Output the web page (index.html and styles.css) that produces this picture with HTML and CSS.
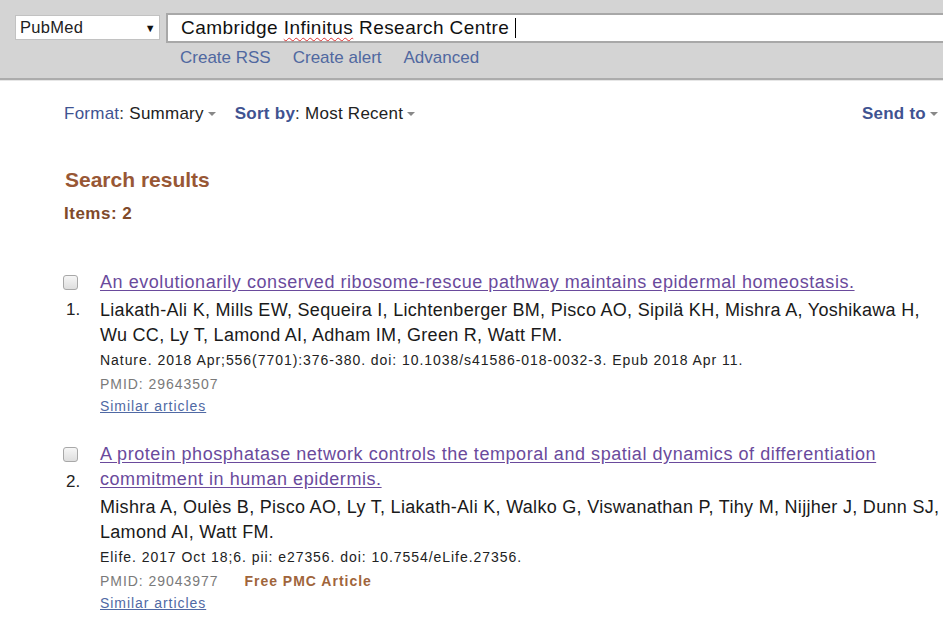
FILE: index.html
```html
<!DOCTYPE html>
<html>
<head>
<meta charset="utf-8">
<link rel="stylesheet" href="styles.css">
</head>
<body>
<div class="header">
  <div class="search-row">
    <div class="db-select"><span>PubMed</span><span class="sel-arrow">▼</span></div>
    <div class="term-box">Cambridge <span class="spell">Infinitus</span> Research Centre <span class="caret"></span></div>
  </div>
  <div class="header-links">
    <a>Create RSS</a><a>Create alert</a><a>Advanced</a>
  </div>
</div>
<div class="main">
  <div class="toolbar">
    <div class="tools-left">
      <span class="tool"><span class="tlabel">Format</span>: <span class="tval">Summary</span><span class="tri"></span></span>
      <span class="tool"><span class="tlabel strong">Sort by</span>: <span class="tval">Most Recent</span><span class="tri"></span></span>
    </div>
    <span class="tool send"><span class="tlabel strong">Send to</span><span class="tri"></span></span>
  </div>
  <h2 class="results-title">Search results</h2>
  <div class="items">Items: 2</div>

  <div class="result first">
    <div class="rleft"><span class="cb"></span><span class="num">1.</span></div>
    <div class="rbody">
      <a class="title">An evolutionarily conserved ribosome-rescue pathway maintains epidermal homeostasis.</a>
      <div class="authors">Liakath-Ali K, Mills EW, Sequeira I, Lichtenberger BM, Pisco AO, Sipilä KH, Mishra A, Yoshikawa H,<br>Wu CC, Ly T, Lamond AI, Adham IM, Green R, Watt FM.</div>
      <div class="cite">Nature. 2018 Apr;556(7701):376-380. doi: 10.1038/s41586-018-0032-3. Epub 2018 Apr 11.</div>
      <div class="pmid">PMID: 29643507</div>
      <a class="similar">Similar articles</a>
    </div>
  </div>

  <div class="result">
    <div class="rleft"><span class="cb"></span><span class="num">2.</span></div>
    <div class="rbody">
      <a class="title">A protein phosphatase network controls the temporal and spatial dynamics of differentiation<br>commitment in human epidermis.</a>
      <div class="authors">Mishra A, Oulès B, Pisco AO, Ly T, Liakath-Ali K, Walko G, Viswanathan P, Tihy M, Nijjher J, Dunn SJ,<br>Lamond AI, Watt FM.</div>
      <div class="cite">Elife. 2017 Oct 18;6. pii: e27356. doi: 10.7554/eLife.27356.</div>
      <div class="pmid">PMID: 29043977<span class="free">Free PMC Article</span></div>
      <a class="similar">Similar articles</a>
    </div>
  </div>
</div>
</body>
</html>
```
FILE: styles.css
```css
html, body {
  margin: 0;
  padding: 0;
  overflow: hidden;
  background: #fff;
}
body {
  font-family: "Liberation Sans", Arial, sans-serif;
  color: #111;
  width: 943px;
}
a { cursor: pointer; }

.header {
  background: #d4d4d4;
  height: 78px;
  border-bottom: 2px solid #acacac;
  box-shadow: 0 1px 0 #e6e6e6;
  overflow: hidden;
  padding-left: 15px;
}
.search-row {
  display: flex;
  align-items: flex-start;
  padding-top: 13px;
  gap: 6px;
}
.db-select {
  flex: none;
  margin-top: 2px;
  width: 145px;
  height: 25px;
  background: #fff;
  border: 1px solid #c2c2c2;
  display: flex;
  align-items: center;
  justify-content: space-between;
  padding: 0 3px 0 4px;
  box-sizing: border-box;
  font-size: 16.5px;
  letter-spacing: 0.3px;
  color: #222;
}
.sel-arrow {
  font-size: 11px;
  color: #111;
  margin-top: 1px;
}
.term-box {
  flex: none;
  width: 900px;
  height: 30px;
  box-sizing: border-box;
  border: 2px solid #a8a8a8;
  border-right: none;
  background: #fff;
  font-size: 19px;
  letter-spacing: 0.45px;
  line-height: 26px;
  padding-left: 13px;
  color: #111;
  white-space: nowrap;
}
.spell {
  text-decoration: underline wavy #d33;
  text-decoration-thickness: 1px;
  text-underline-offset: 3px;
}
.caret {
  display: inline-block;
  width: 1px;
  height: 20px;
  background: #000;
  vertical-align: -4px;
}
.header-links {
  display: flex;
  gap: 22px;
  margin-top: 5px;
  padding-left: 165px;
  font-size: 17px;
  line-height: 20px;
}
.header-links a { color: #5068a0; }

.main {
  padding-left: 64px;
}
.toolbar {
  display: flex;
  justify-content: space-between;
  align-items: center;
  margin-top: 24px;
  height: 20px;
  font-size: 17px;
  letter-spacing: 0.25px;
  line-height: 20px;
  padding-right: 5px;
}
.tools-left {
  display: flex;
  gap: 19px;
}
.tool { color: #333; }
.tlabel { color: #3f5391; }
.tlabel.strong { font-weight: bold; }
.tval { color: #222; }
.tri {
  display: inline-block;
  width: 0;
  height: 0;
  border-left: 4px solid transparent;
  border-right: 4px solid transparent;
  border-top: 4px solid #888;
  margin-left: 4px;
  vertical-align: 3px;
}

.results-title {
  margin: 44px 0 0 1px;
  font-size: 21px;
  line-height: 24px;
  font-weight: bold;
  color: #985735;
}
.items {
  margin-top: 12px;
  font-size: 17px;
  letter-spacing: 0.5px;
  line-height: 20px;
  font-weight: bold;
  color: #7f4a2a;
}

.result {
  display: flex;
  margin-top: 26px;
}
.result.first { margin-top: 46px; }
.rleft {
  width: 36px;
  flex: none;
  display: flex;
  flex-direction: column;
  padding-top: 5px;
}
.cb {
  width: 13px;
  height: 13px;
  border: 1px solid #a8a8a8;
  border-radius: 3px;
  background: linear-gradient(#f6f6f6, #dedede);
  margin-left: -1px;
}
.num {
  font-size: 17px;
  line-height: 20px;
  margin-top: 10px;
  margin-left: 2px;
  color: #222;
}
.rbody {
  flex: 1;
  white-space: nowrap;
}
.title {
  display: block;
  font-size: 18px;
  letter-spacing: 0.55px;
  line-height: 25px;
  color: #6a4a9c;
  text-decoration: underline;
  text-underline-offset: 2px;
}
.authors {
  margin-top: 3px;
  font-size: 18px;
  letter-spacing: 0.3px;
  line-height: 25px;
  color: #1a1a1a;
}
.cite, .pmid, .similar {
  font-size: 14px;
  letter-spacing: 0.95px;
}
.cite {
  line-height: 24px;
  color: #222;
}
.pmid {
  line-height: 24px;
  color: #7a7a7a;
}
.free {
  margin-left: 26px;
  font-weight: bold;
  letter-spacing: 1px;
  color: #a0653b;
}
.similar {
  display: block;
  line-height: 20px;
  color: #5069a4;
  text-decoration: underline;
}
```
